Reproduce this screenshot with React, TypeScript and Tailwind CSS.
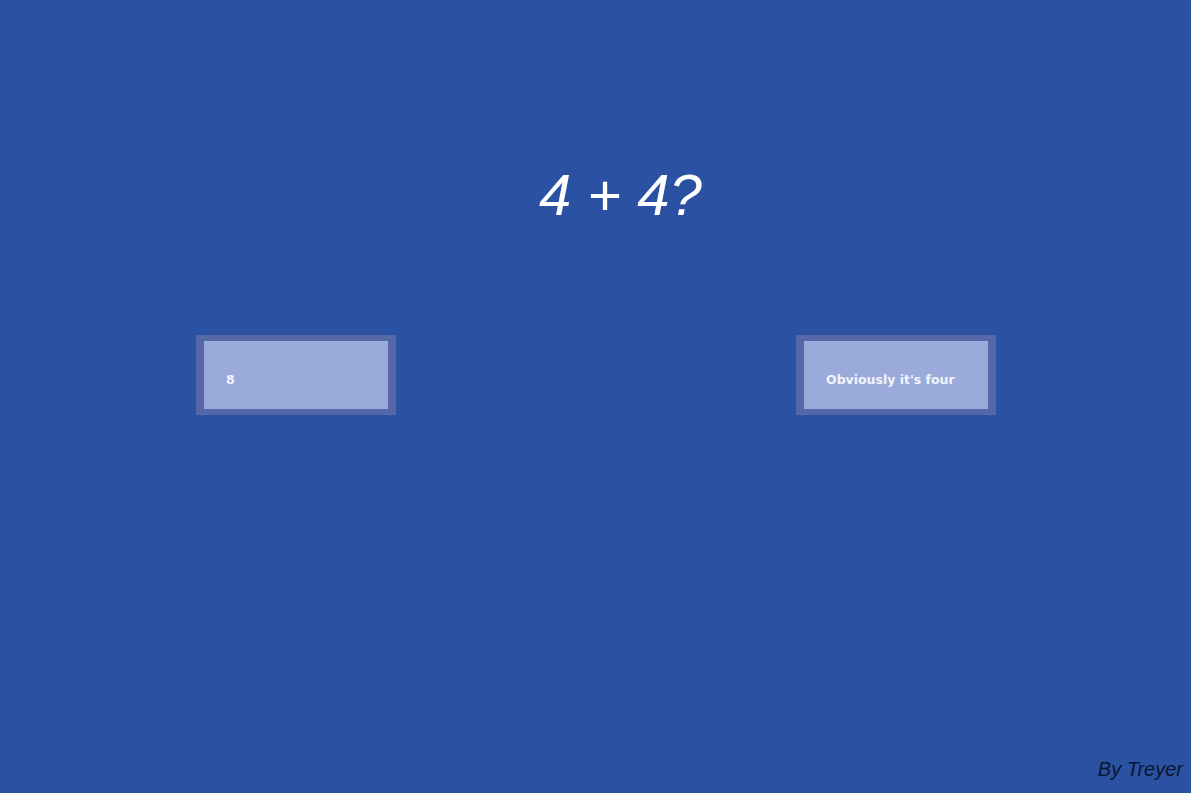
export default function App() {
  return (
    <div className="w-[1191px] h-[793px] bg-[#2b52a2] flex flex-col relative overflow-hidden">
      <div className="pt-[155px] pl-[539px] h-[335px]">
        <div className="text-white italic text-[58px] leading-[80px]" style={{ fontFamily: '"Liberation Sans", Arial, sans-serif' }}>
          4 + 4?
        </div>
      </div>
      <div className="flex pl-[196px] gap-[400px]">
        <button className="w-[200px] h-[80px] bg-[#5467a9] px-[8px] py-[6px] flex">
          <div className="flex-1 bg-[#9aabdb] flex items-center pl-[22px] pt-[10px] text-[#f2f4fb] font-bold text-[12.5px]" style={{ fontFamily: '"DejaVu Sans", Verdana, sans-serif' }}>
            8
          </div>
        </button>
        <button className="w-[200px] h-[80px] bg-[#5467a9] px-[8px] py-[6px] flex">
          <div className="flex-1 bg-[#9aabdb] flex items-center pl-[22px] pt-[10px] text-[#f2f4fb] font-bold text-[12.5px]" style={{ fontFamily: '"DejaVu Sans", Verdana, sans-serif' }}>
            Obviously it's four
          </div>
        </button>
      </div>
      <div className="flex-1" />
      <div className="flex justify-end pr-[8px] pb-[12px]">
        <span className="italic text-[20px] leading-[24px] text-[#0a1530]" style={{ fontFamily: '"Liberation Sans", Arial, sans-serif' }}>
          By Treyer
        </span>
      </div>
    </div>
  );
}
